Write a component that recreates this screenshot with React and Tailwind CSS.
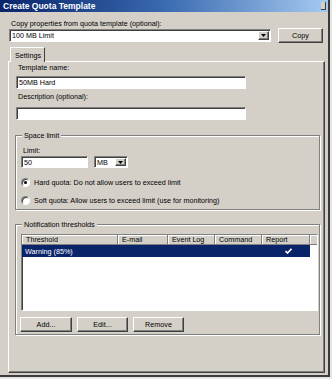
import React from "react";

const sunken =
  "bg-white border border-t-[#808080] border-l-[#808080] border-b-white border-r-white shadow-[inset_1px_1px_0_#404040]";
const raised =
  "bg-[#d4d0c8] border border-t-white border-l-white border-b-[#404040] border-r-[#404040] shadow-[inset_-1px_-1px_0_#808080]";

function Arrow() {
  return (
    <svg width="5" height="3" viewBox="0 0 5 3">
      <polygon points="0,0 5,0 2.5,3" fill="#000" />
    </svg>
  );
}

function DropBtn() {
  return (
    <div className={`${raised} w-[11px] h-full flex items-center justify-center`}>
      <Arrow />
    </div>
  );
}

function Btn({ children, w }) {
  return (
    <div className={`${raised} h-[15px] flex items-center justify-center ${w}`}>
      {children}
    </div>
  );
}

function Radio({ checked }) {
  return (
    <div className="w-[9px] h-[9px] rounded-full bg-white border border-t-[#808080] border-l-[#808080] border-b-white border-r-white shadow-[inset_1px_1px_0_#404040] flex items-center justify-center">
      {checked && <div className="w-[3px] h-[3px] rounded-full bg-black" />}
    </div>
  );
}

function Group({ label, className, children }) {
  return (
    <div
      className={`relative border border-[#808080] shadow-[inset_1px_1px_0_#ffffff,1px_1px_0_#ffffff] ${className}`}
    >
      <div className="absolute left-[6px] top-[-5px] px-[2px] bg-[#d4d0c8] leading-[9px]">{label}</div>
      {children}
    </div>
  );
}

const cols = [
  { t: "Threshold", w: "w-[96px]" },
  { t: "E-mail", w: "w-[50px]" },
  { t: "Event Log", w: "w-[47px]" },
  { t: "Command", w: "w-[47px]" },
  { t: "Report", w: "w-[48px]" },
];

export default function App() {
  return (
    <div className="w-[332px] h-[379px] bg-[#e6e6e6] font-['Liberation_Sans',Arial,sans-serif] text-[7.2px] leading-[9px] text-black overflow-hidden">
      <div className="w-[330px] h-[377px] bg-[#d4d0c8] border-r-[2px] border-b-[2px] border-[#3a3a3a] flex flex-col">
        {/* title bar */}
        <div className="h-[12px] shrink-0 bg-gradient-to-r from-[#0a246a] via-[#3a6ab0] to-[#a6caf0] flex items-center pl-[3px] pr-[2px]">
          <span className="text-white font-bold text-[8.5px] leading-[12px]">Create Quota Template</span>
          <div className="ml-auto w-[5px] h-[8px] bg-[#d4d0c8] border-r border-b border-[#404040]" />
        </div>

        {/* copy row */}
        <div className="flex pl-[9px] pt-[7px]">
          <div className="w-[262px]">
            <div className="pl-[2px] h-[9px]">Copy properties from quota template (optional):</div>
            <div className={`${sunken} mt-[1px] h-[13px] flex items-center pl-[2px] pr-[1px] py-[1px]`}>
              <span className="flex-1">100 MB Limit</span>
              <DropBtn />
            </div>
          </div>
          <div className="ml-[7px] mt-[9px]">
            <Btn w="w-[45px]">Copy</Btn>
          </div>
        </div>

        {/* tab */}
        <div className="mt-[4px] pl-[10px] relative z-10 flex">
          <div className="w-[35px] h-[15px] bg-[#d4d0c8] border-t border-l border-white border-r border-r-[#404040] flex items-center pl-[4px] pt-[1px]">
            Settings
          </div>
        </div>

        {/* panel */}
        <div className="ml-[8px] mt-[-1px] w-[317px] h-[312px] border border-t-white border-l-white border-b-[#404040] border-r-[#404040] shadow-[inset_-1px_-1px_0_#808080] pl-[6px] flex flex-col">
          <div className="ml-[3px] mt-[1px] h-[9px]">Template name:</div>
          <div className={`${sunken} ml-[1px] mt-[4px] w-[230px] h-[13px] flex items-center pl-[2px]`}>50MB Hard</div>
          <div className="ml-[3px] mt-[3px] h-[9px]">Description (optional):</div>
          <div className={`${sunken} ml-[1px] mt-[6px] w-[230px] h-[13px]`} />

          <Group label="Space limit" className="mt-[15px] w-[305px] h-[75px] shrink-0">
            <div className="pl-[7px] pt-[10px] h-[19px]">Limit:</div>
            <div className="flex pl-[5px] mt-[1px]">
              <div className={`${sunken} w-[67px] h-[12px] flex items-center pl-[2px]`}>50</div>
              <div className={`${sunken} ml-[6px] w-[34px] h-[12px] flex items-center pl-[2px] pr-[1px] py-[1px]`}>
                <span className="flex-1">MB</span>
                <DropBtn />
              </div>
            </div>
            <div className="flex items-center pl-[5px] mt-[9px] h-[10px] gap-[4px]">
              <Radio checked />
              <span>Hard quota: Do not allow users to exceed limit</span>
            </div>
            <div className="flex items-center pl-[5px] mt-[8px] h-[10px] gap-[4px]">
              <Radio />
              <span>Soft quota: Allow users to exceed limit (use for monitoring)</span>
            </div>
          </Group>

          <Group label="Notification thresholds" className="mt-[14px] w-[305px] h-[111px] shrink-0">
            <div className={`${sunken} ml-[5px] mt-[9px] w-[297px] h-[77px] overflow-hidden`}>
              <div className="flex h-[10px]">
                {cols.map((c) => (
                  <div
                    key={c.t}
                    className={`${c.w} h-[10px] bg-[#d4d0c8] border-r border-b border-[#808080] shadow-[inset_1px_1px_0_#ffffff] pl-[4px] leading-[10px]`}
                  >
                    {c.t}
                  </div>
                ))}
                <div className="flex-1 h-[10px] bg-[#d4d0c8] border-b border-[#808080] shadow-[inset_1px_1px_0_#ffffff]" />
              </div>
              <div className="flex h-[12px] w-[288px] bg-[#0a246a] text-white items-center">
                <div className="w-[96px] pl-[3px]">Warning (85%)</div>
                <div className="w-[50px]" />
                <div className="w-[47px]" />
                <div className="w-[47px]" />
                <div className="w-[48px] flex justify-center pl-[5px]">
                  <svg width="7" height="6" viewBox="0 0 7 6">
                    <path d="M0.5 3 L2.5 5 L6.5 0.8" stroke="#fff" strokeWidth="1.6" fill="none" />
                  </svg>
                </div>
              </div>
            </div>
            <div className="flex pl-[4px] mt-[6px] gap-[5px]">
              <Btn w="w-[52px]">Add...</Btn>
              <Btn w="w-[51px]">Edit...</Btn>
              <Btn w="w-[51px]">Remove</Btn>
            </div>
          </Group>
        </div>
      </div>
    </div>
  );
}
